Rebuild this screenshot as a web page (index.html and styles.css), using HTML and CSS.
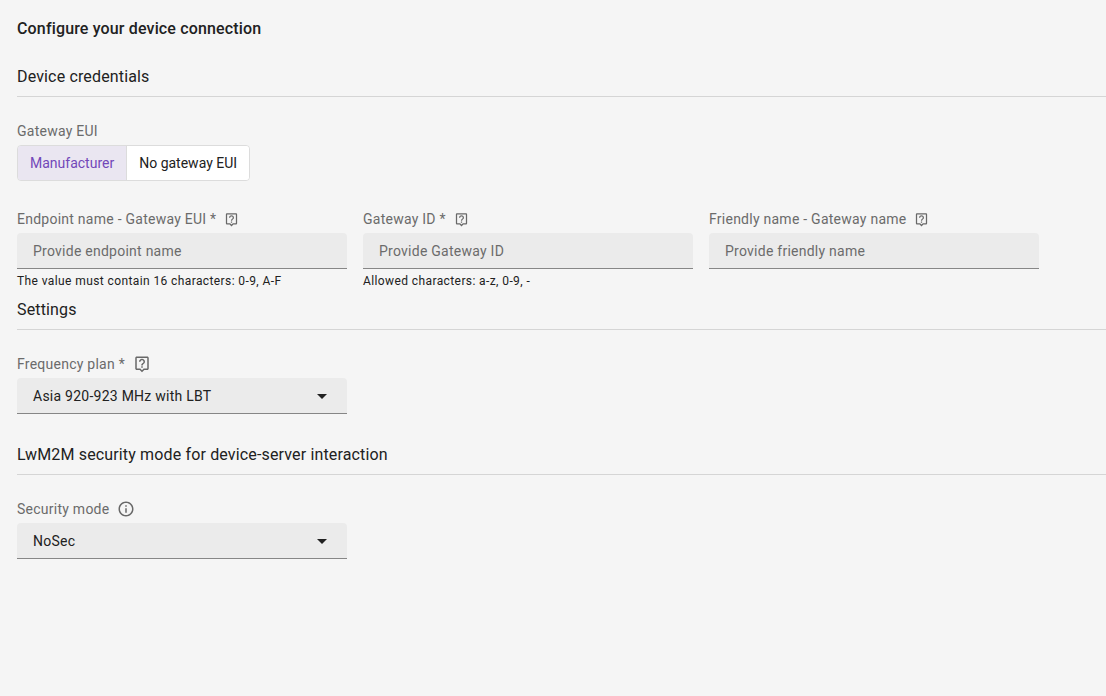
FILE: index.html
```html
<!DOCTYPE html>
<html lang="en">
<head>
<meta charset="utf-8">
<title>Configure your device connection</title>
<link rel="stylesheet" href="styles.css">
</head>
<body>
<svg class="sprite" width="0" height="0">
  <symbol id="help" viewBox="0 0 24 24"><path d="M19 2H5c-1.11 0-2 .9-2 2v14c0 1.1.89 2 2 2h4l3 3 3-3h4c1.1 0 2-.9 2-2V4c0-1.1-.9-2-2-2zm0 16h-4.83L12 20.17 9.830 18H5V4h14v14zm-8-3h2v2h-2zm1-8c1.1 0 2 .9 2 2 0 2-3 1.75-3 5h2c0-2.250 3-2.500 3-5 0-2.210-1.790-4-4-4S8 6.790 8 9h2c0-1.100.9-2 2-2z"/></symbol>
  <symbol id="info" viewBox="0 0 24 24"><path d="M11 7h2v2h-2zm0 4h2v6h-2zm1-9C6.480 2 2 6.480 2 12s4.480 10 10 10 10-4.480 10-10S17.520 2 12 2zm0 18c-4.410 0-8-3.590-8-8s3.590-8 8-8 8 3.590 8 8-3.590 8-8 8z"/></symbol>
</svg>
<main class="page">
  <h1 class="title">Configure your device connection</h1>

  <section class="section">
    <h2 class="heading">Device credentials</h2>
    <div class="field field-toggle">
      <div class="label">Gateway EUI</div>
      <div class="toggle">
        <button class="option selected">Manufacturer</button>
        <button class="option">No gateway EUI</button>
      </div>
    </div>
    <div class="row">
      <div class="field">
        <div class="label"><span>Endpoint name - Gateway EUI *</span><svg class="icon small"><use href="#help"/></svg></div>
        <div class="control placeholder">Provide endpoint name</div>
        <div class="hint">The value must contain 16 characters: 0-9, A-F</div>
      </div>
      <div class="field">
        <div class="label"><span>Gateway ID *</span><svg class="icon small"><use href="#help"/></svg></div>
        <div class="control placeholder">Provide Gateway ID</div>
        <div class="hint">Allowed characters: a-z, 0-9, -</div>
      </div>
      <div class="field">
        <div class="label"><span>Friendly name - Gateway name</span><svg class="icon small"><use href="#help"/></svg></div>
        <div class="control placeholder">Provide friendly name</div>
      </div>
    </div>
  </section>

  <section class="section section-settings">
    <h2 class="heading">Settings</h2>
    <div class="field">
      <div class="label"><span>Frequency plan *</span><svg class="icon"><use href="#help"/></svg></div>
      <div class="control"><span>Asia 920-923 MHz with LBT</span><svg class="arrow" viewBox="0 0 10 5"><path d="M0 0h10L5 5z"/></svg></div>
    </div>
  </section>

  <section class="section section-security">
    <h2 class="heading">LwM2M security mode for device-server interaction</h2>
    <div class="field">
      <div class="label"><span>Security mode</span><svg class="icon"><use href="#info"/></svg></div>
      <div class="control"><span>NoSec</span><svg class="arrow" viewBox="0 0 10 5"><path d="M0 0h10L5 5z"/></svg></div>
    </div>
  </section>
</main>
</body>
</html>
```
FILE: styles.css
```css
* { box-sizing: border-box; }
body {
  margin: 0;
  background: #f5f5f5;
  color: #212121;
  font-family: Roboto, sans-serif;
  font-size: 14px;
  overflow: hidden;
}
.sprite { position: absolute; }
.page { padding: 17px 0 0 17px; }
.title, .heading {
  margin: 0;
  font-size: 16px;
  line-height: 24px;
  letter-spacing: 0.15px;
}
.title { font-weight: 500; }
.section { padding-top: 24px; }
.section-settings { padding-top: 9px; }
.section-security { padding-top: 29px; }
.heading {
  font-weight: 400;
  padding-bottom: 7px;
  border-bottom: 1px solid #d5d5d5;
  margin-bottom: 24px;
}
.row { display: flex; gap: 16px; }
.field { width: 330px; }
.field-toggle { margin-bottom: 28px; }
.label {
  display: flex;
  align-items: center;
  height: 20px;
  margin-bottom: 4px;
  color: #6b6b6b;
  letter-spacing: 0.25px;
}
.icon {
  width: 18px;
  height: 18px;
  margin-left: 8px;
  fill: #686868;
}
.icon.small { width: 15px; height: 15px; }
.toggle {
  display: inline-flex;
  height: 36px;
  vertical-align: top;
  border: 1px solid #dcdcdc;
  border-radius: 4px;
  overflow: hidden;
}
.option {
  border: 0;
  padding: 0 12px;
  background: #fff;
  color: #212121;
  font: inherit;
  letter-spacing: 0;
}
.option.selected { background: #eae6f1; color: #7248b9; }
.option + .option { border-left: 1px solid #dcdcdc; }
.control {
  display: flex;
  align-items: center;
  justify-content: space-between;
  height: 36px;
  padding: 0 20px 0 16px;
  background: #ebebeb;
  border-bottom: 1px solid #868686;
  border-radius: 4px 4px 0 0;
  letter-spacing: 0.25px;
}
.placeholder { color: #6b6b6b; }
.arrow { width: 10px; height: 5px; margin-top: 2px; fill: #212121; }
.hint {
  margin-top: 4px;
  font-size: 12px;
  line-height: 16px;
  letter-spacing: 0.4px;
}
```
